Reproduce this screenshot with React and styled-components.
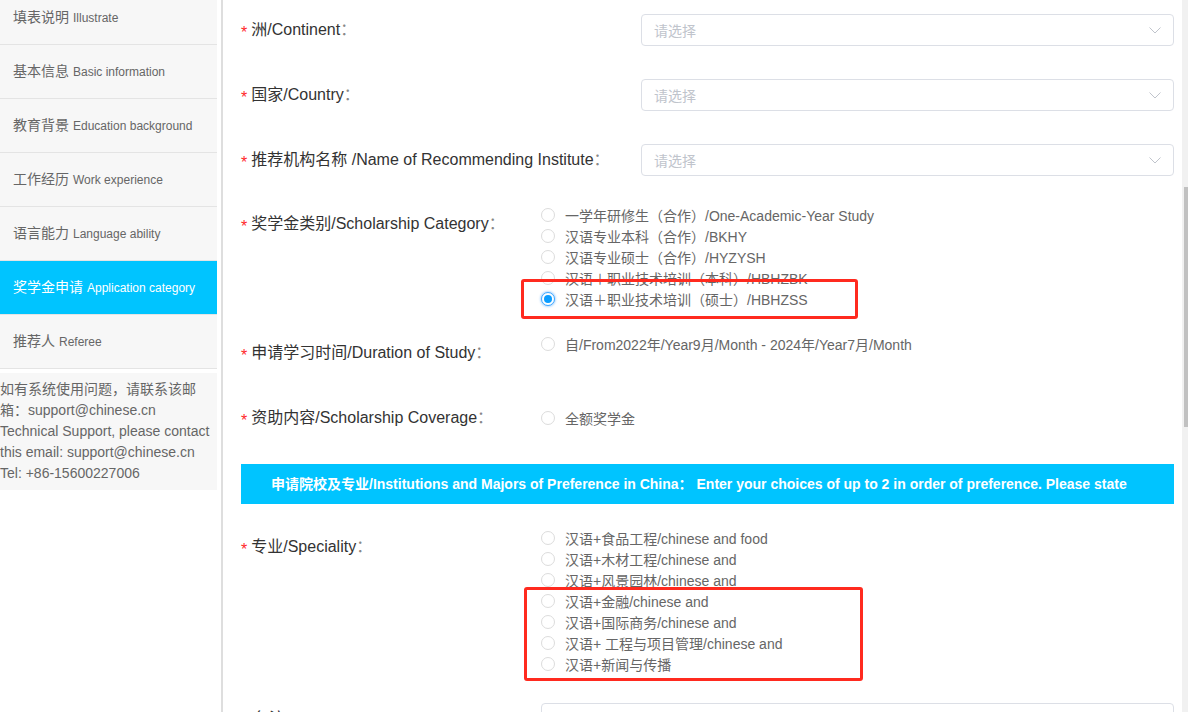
import React from "react";
import styled, { createGlobalStyle, css } from "styled-components";

const GlobalStyle = createGlobalStyle`
  html, body {
    margin: 0;
    padding: 0;
    height: 712px;
    overflow: hidden;
    background: #fff;
  }
  body {
    font-family: "Liberation Sans", Arial, "Noto Sans CJK SC", sans-serif;
  }
  * { box-sizing: border-box; }
`;

const Page = styled.div`
  display: flex;
  height: 712px;
  overflow: hidden;
`;

const Sidebar = styled.aside`
  width: 217px;
  flex: none;
  margin-top: -9px;
  margin-right: 4px;
  display: flex;
  flex-direction: column;
`;

const NavItem = styled.div`
  height: 54px;
  flex: none;
  border-bottom: 1px solid #e4e4e4;
  background: ${(p) => (p.$active ? "#00c4ff" : "#f7f7f7")};
  color: ${(p) => (p.$active ? "#fff" : "#666")};
  display: flex;
  align-items: center;
  padding-left: 13px;
  white-space: nowrap;
`;

const NavText = styled.span`
  font-size: 14px;
  line-height: 20px;
`;

const NavEn = styled.span`
  font-size: 12px;
  margin-left: 4px;
`;

const SupportBox = styled.div`
  margin-top: 4px;
  padding: 6px 0 6px;
  background: #f7f7f7;
  color: #666;
  font-size: 14px;
  line-height: 21px;
`;

const Main = styled.main`
  flex: 1;
  min-width: 0;
  border-left: 2px solid #dedede;
  padding: 10px 8px 0 18px;
  display: flex;
  flex-direction: column;
`;

const FormRow = styled.div`
  display: flex;
  align-items: flex-start;
  min-height: 40px;
  margin-bottom: ${(p) => p.$gap ?? 25}px;
  flex: none;
`;

const Label = styled.div`
  width: ${(p) => p.$w}px;
  height: 40px;
  flex: none;
  display: flex;
  align-items: center;
  font-size: 16px;
  line-height: 20px;
  color: #333;
  white-space: nowrap;
  ${(p) =>
    p.$plain &&
    css`
      padding-left: 12px;
    `}
`;

const Star = styled.span`
  color: #ff2a2a;
  font-size: 16px;
  margin-right: 4px;
  padding-top: 5px;
`;

const Colon = styled.span`
  color: #888;
`;

const SelectBox = styled.div`
  flex: 1;
  height: 32px;
  margin-top: 4px;
  border: 1px solid #dcdfe6;
  border-radius: 4px;
  display: flex;
  align-items: center;
  justify-content: space-between;
  padding: 0 12px 0 12px;
  background: #fff;
`;

const Placeholder = styled.span`
  font-size: 14px;
  color: #c0c4cc;
`;

const InputBox = styled.div`
  flex: 1;
  height: 32px;
  margin-top: 4px;
  border: 1px solid #dcdfe6;
  border-radius: 4px;
  background: #fff;
`;

const RadioGroup = styled.div`
  position: relative;
  display: flex;
  flex-direction: column;
  align-self: ${(p) => (p.$center ? "center" : "flex-start")};
`;

const RadioOption = styled.label`
  display: flex;
  align-items: center;
  height: 21px;
  gap: 10px;
  font-size: 14px;
  color: #666;
  white-space: nowrap;
`;

const RadioCircle = styled.span`
  width: 14px;
  height: 14px;
  flex: none;
  border-radius: 50%;
  border: 1px solid ${(p) => (p.$checked ? "#3aa6ff" : "#dcdcdc")};
  background: #fff;
  display: flex;
  align-items: center;
  justify-content: center;
  ${(p) =>
    p.$checked &&
    css`
      box-shadow: 0 0 2px 1px rgba(40, 150, 255, 0.35);
      &::after {
        content: "";
        width: 8px;
        height: 8px;
        border-radius: 50%;
        background: #0a9dff;
      }
    `}
`;

const Annotation = styled.div`
  position: absolute;
  border: 3px solid #ff2a1f;
  border-radius: 3px;
  pointer-events: none;
`;

const Banner = styled.div`
  height: 40px;
  line-height: 40px;
  flex: none;
  background: #00c4ff;
  color: #fff;
  font-weight: bold;
  font-size: 14px;
  padding: 0 30px;
  white-space: nowrap;
  overflow: hidden;
  margin-bottom: 23px;
`;

const ScrollTrack = styled.div`
  width: 6px;
  flex: none;
  background: #f1f1f1;
  display: flex;
  justify-content: flex-end;
`;

const ScrollThumb = styled.div`
  width: 4px;
  height: 240px;
  margin-top: 187px;
  background: #c1c1c1;
`;

const Chevron = () => (
  <svg width="12" height="7" viewBox="0 0 12 7" fill="none">
    <polyline points="0.5,0.5 6,6 11.5,0.5" stroke="#c0c4cc" strokeWidth="1" />
  </svg>
);

const navItems = [
  ["填表说明", "Illustrate"],
  ["基本信息", "Basic information"],
  ["教育背景", "Education background"],
  ["工作经历", "Work experience"],
  ["语言能力", "Language ability"],
  ["奖学金申请", "Application category", true],
  ["推荐人", "Referee"],
];

const categories = [
  "一学年研修生（合作）/One-Academic-Year Study",
  "汉语专业本科（合作）/BKHY",
  "汉语专业硕士（合作）/HYZYSH",
  "汉语＋职业技术培训（本科）/HBHZBK",
  "汉语＋职业技术培训（硕士）/HBHZSS",
];

const specialities = [
  "汉语+食品工程/chinese and food",
  "汉语+木材工程/chinese and",
  "汉语+风景园林/chinese and",
  "汉语+金融/chinese and",
  "汉语+国际商务/chinese and",
  "汉语+ 工程与项目管理/chinese and",
  "汉语+新闻与传播",
];

const Radio = ({ text, checked }) => (
  <RadioOption>
    <RadioCircle $checked={checked} />
    <span>{text}</span>
  </RadioOption>
);

const SelectRow = ({ label, gap }) => (
  <FormRow $gap={gap}>
    <Label $w={400}>
      <Star>*</Star>
      <span>
        {label}
        <Colon>：</Colon>
      </span>
    </Label>
    <SelectBox>
      <Placeholder>请选择</Placeholder>
      <Chevron />
    </SelectBox>
  </FormRow>
);

const FieldLabel = ({ children, plain }) => (
  <Label $w={300} $plain={plain}>
    {!plain && <Star>*</Star>}
    <span>
      {children}
      <Colon>：</Colon>
    </span>
  </Label>
);

export default function App() {
  return (
    <>
      <GlobalStyle />
      <Page>
        <Sidebar>
          {navItems.map(([cn, en, active]) => (
            <NavItem key={cn} $active={active}>
              <NavText>
                {cn}
                <NavEn>{en}</NavEn>
              </NavText>
            </NavItem>
          ))}
          <SupportBox>
            如有系统使用问题，请联系该邮箱：support@chinese.cn Technical Support, please contact this email: support@chinese.cn Tel: +86-15600227006
          </SupportBox>
        </Sidebar>
        <Main>
          <SelectRow label="洲/Continent" />
          <SelectRow label="国家/Country" />
          <SelectRow label="推荐机构名称 /Name of Recommending Institute" gap={24} />

          <FormRow $gap={24}>
            <FieldLabel>奖学金类别/Scholarship Category</FieldLabel>
            <RadioGroup>
              {categories.map((c, i) => (
                <Radio key={c} text={c} checked={i === 4} />
              ))}
              <Annotation style={{ left: -20, top: 75, width: 337, height: 40 }} />
            </RadioGroup>
          </FormRow>

          <FormRow>
            <FieldLabel>申请学习时间/Duration of Study</FieldLabel>
            <RadioGroup>
              <Radio text="自/From2022年/Year9月/Month - 2024年/Year7月/Month" />
            </RadioGroup>
          </FormRow>

          <FormRow $gap={26}>
            <FieldLabel>资助内容/Scholarship Coverage</FieldLabel>
            <RadioGroup $center>
              <Radio text="全额奖学金" />
            </RadioGroup>
          </FormRow>

          <Banner>
            申请院校及专业/Institutions and Majors of Preference in China：&nbsp;Enter your choices of up to 2 in order of preference. Please state
          </Banner>

          <FormRow>
            <FieldLabel>专业/Speciality</FieldLabel>
            <RadioGroup>
              {specialities.map((s) => (
                <Radio key={s} text={s} />
              ))}
              <Annotation style={{ left: -17, top: 60, width: 339, height: 94 }} />
            </RadioGroup>
          </FormRow>

          <FormRow>
            <FieldLabel plain>备注/Remarks</FieldLabel>
            <InputBox />
          </FormRow>
        </Main>
        <ScrollTrack>
          <ScrollThumb />
        </ScrollTrack>
      </Page>
    </>
  );
}
